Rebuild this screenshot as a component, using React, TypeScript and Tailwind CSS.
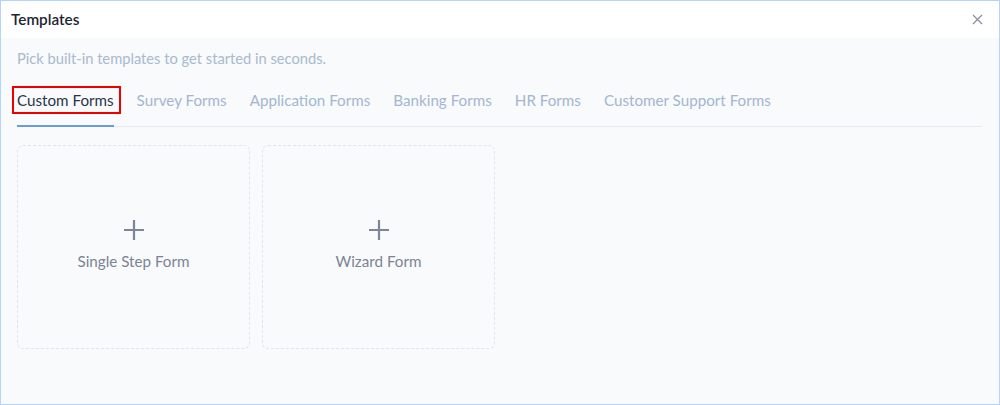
import React from "react";

const tabs = ["Custom Forms", "Survey Forms", "Application Forms", "Banking Forms", "HR Forms", "Customer Support Forms"];

function Card({ label }: { label: string }) {
  return (
    <div className="w-[233px] h-[204px] rounded-md border border-dashed border-[#dde5f0] flex flex-col items-center justify-center">
      <svg width="22" height="22" viewBox="0 0 22 22" className="mt-[-1px]">
        <path d="M11 1v20M1 11h20" stroke="#7d8696" strokeWidth="2.2" />
      </svg>
      <div className="mt-[9px] text-[15.2px] text-[#7b8494]">{label}</div>
    </div>
  );
}

export default function App() {
  return (
    <div
      className="w-[1000px] h-[405px] border border-[#b3d4fc] bg-[#f8fafc] flex flex-col"
      style={{ fontFamily: "Lato, 'Open Sans', sans-serif" }}
    >
      <div className="h-[37px] bg-white flex items-center justify-between pl-[10px] pr-[16px] shrink-0">
        <div className="text-[15.3px] font-semibold text-[#1e2433]">Templates</div>
        <svg width="11" height="11" viewBox="0 0 11 11">
          <path d="M1 1l9 9M10 1l-9 9" stroke="#8a909c" strokeWidth="1.3" />
        </svg>
      </div>
      <div className="px-[16px] pt-[9px]">
        <div className="text-[14.7px] text-[#a9b9cf]">Pick built-in templates to get started in seconds.</div>
        <div className="mt-[20px] flex border-b border-[#e6ebf2] mr-[1px]">
          {tabs.map((t, i) => (
            <div key={t} className="relative mr-[23px]">
              <div
                className={
                  "pb-[13px] pt-[0px] text-[15.2px] " +
                  (i === 0 ? "text-[#2b3447] border-b-2 border-[#6a9be0] -mb-px" : "text-[#a3b6d2]")
                }
              >
                {t}
              </div>
              {i === 0 && (
                <div className="absolute left-[-5px] right-[-7px] top-[-3px] h-[28px] border-2 border-[#ee0000]" />
              )}
            </div>
          ))}
        </div>
        <div className="mt-[18px] flex gap-[12px]">
          <Card label="Single Step Form" />
          <Card label="Wizard Form" />
        </div>
      </div>
    </div>
  );
}
